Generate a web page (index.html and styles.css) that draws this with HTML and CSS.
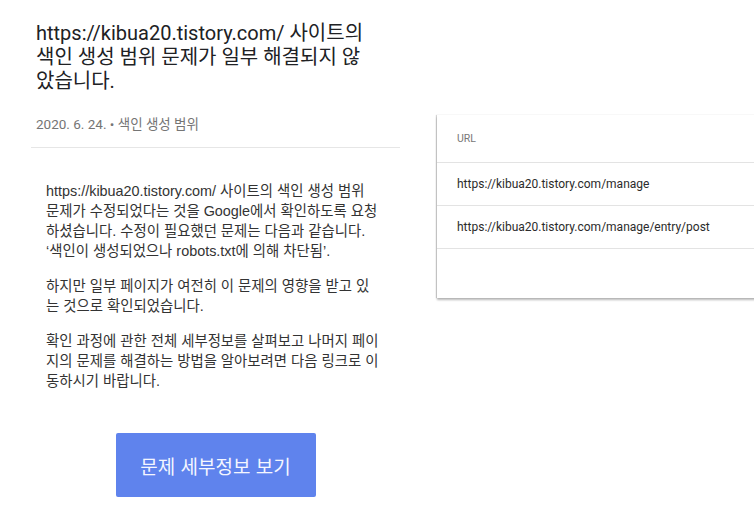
FILE: index.html
```html
<!DOCTYPE html>
<html lang="ko">
<head>
<meta charset="utf-8">
<link rel="stylesheet" href="styles.css">
</head>
<body>
<div class="page">
  <main class="mail">
    <h1 class="title">https://kibua20.tistory.com/ 사이트의 색인 생성 범위 문제가 일부 해결되지 않았습니다.</h1>
    <div class="meta">2020. 6. 24. • 색인 생성 범위</div>
    <div class="body">
      <p>https://kibua20.tistory.com/ 사이트의 색인 생성 범위 문제가 수정되었다는 것을 Google에서 확인하도록 요청하셨습니다. 수정이 필요했던 문제는 다음과 같습니다. ‘색인이 생성되었으나 robots.txt에 의해 차단됨’.</p>
      <p>하지만 일부 페이지가 여전히 이 문제의 영향을 받고 있는 것으로 확인되었습니다.</p>
      <p>확인 과정에 관한 전체 세부정보를 살펴보고 나머지 페이지의 문제를 해결하는 방법을 알아보려면 다음 링크로 이동하시기 바랍니다.</p>
    </div>
    <div class="action">
      <a class="btn">문제 세부정보 보기</a>
    </div>
  </main>
  <aside class="card">
    <div class="row head">URL</div>
    <div class="row">https://kibua20.tistory.com/manage</div>
    <div class="row">https://kibua20.tistory.com/manage/entry/post</div>
    <div class="filler"></div>
  </aside>
</div>
</body>
</html>
```
FILE: styles.css
```css
html, body {
  margin: 0;
  padding: 0;
  background: #ffffff;
}
body {
  width: 754px;
  height: 525px;
  overflow: hidden;
  font-family: Roboto, "Noto Sans CJK KR", sans-serif;
}
.page {
  display: flex;
  align-items: flex-start;
}
.mail {
  margin-left: 30px;
  width: 370px;
  flex: none;
}
.title {
  margin: 0;
  padding: 21px 0 0 6px;
  width: 336px;
  font-size: 20px;
  line-height: 24px;
  font-weight: 400;
  color: #202124;
}
.meta {
  margin: 22px 0 0 1px;
  padding: 0 0 14px 5px;
  font-size: 13.5px;
  line-height: 18px;
  color: #757575;
  border-bottom: 1px solid #e6e6e6;
}
.body {
  padding: 33px 0 0 16px;
  width: 335px;
  font-family: "Liberation Sans", "Noto Sans CJK KR", sans-serif;
  font-size: 14.4px;
  line-height: 20px;
  color: #333333;
}
.body p {
  margin: 0 0 15px;
}
.body p:last-child {
  margin-bottom: 0;
}
.action {
  display: flex;
  justify-content: center;
  padding-top: 42px;
  padding-left: 1px;
}
.btn {
  display: flex;
  align-items: center;
  justify-content: center;
  width: 200px;
  height: 64px;
  background: #5f83ed;
  border-radius: 2px;
  color: #f4f6ff;
  font-size: 19px;
  font-family: "Noto Sans CJK KR", sans-serif;
}
.card {
  margin: 115px 0 0 37px;
  flex: 1;
  min-width: 330px;
  background: #fff;
  box-shadow: 0 2px 2px rgba(0,0,0,0.28), -1px 0 1px rgba(0,0,0,0.16);
  font-size: 12px;
  color: #2b2b2b;
}
.row {
  height: 42px;
  display: flex;
  align-items: center;
  padding-left: 20px;
  border-bottom: 1px solid #e3e3e3;
  white-space: nowrap;
}
.row.head {
  height: 47px;
  font-size: 10.5px;
  color: #777777;
}
.filler {
  height: 49px;
}
```
